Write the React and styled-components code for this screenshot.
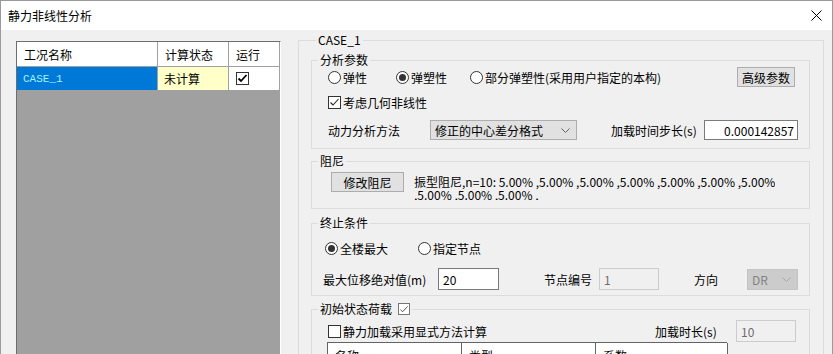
import React from "react";
import styled, { createGlobalStyle } from "styled-components";

const FONT = `"Noto Sans CJK SC", "Noto Sans", sans-serif`;

const Global = createGlobalStyle`
  html, body { margin: 0; padding: 0; background: #f0f0f0; }
  body { font-family: ${FONT}; font-size: 12px; color: #000; }
  * { box-sizing: border-box; }
`;

const Window = styled.div`
  width: 833px;
  height: 354px;
  overflow: hidden;
  border: 1px solid #9a9a9a;
  border-bottom: none;
  background: #f0f0f0;
  display: flex;
  flex-direction: column;
`;

const TitleBar = styled.div`
  height: 29px;
  flex: none;
  background: #fff;
  display: flex;
  align-items: center;
  justify-content: space-between;
  padding: 0 10px 0 7px;
  font-size: 12px;
`;

const Body = styled.div`
  flex: 1;
  display: flex;
  align-items: flex-start;
  padding-left: 15px;
  min-height: 0;
`;

/* ---------- left grid ---------- */
const Grid = styled.div`
  width: 265px;
  height: 330px;
  margin-top: 11px;
  flex: none;
  border-top: 1px solid #6d6d6d;
  border-left: 1px solid #6d6d6d;
  border-right: 1px solid #ffffff;
  background: #a0a0a0;
  display: grid;
  grid-template-columns: 141px 71px 51px;
  grid-template-rows: 25px 24px;
  align-content: start;
`;

const HeadCell = styled.div`
  background: #fff;
  border-right: 1px solid #a0a0a0;
  border-bottom: 1px solid #a0a0a0;
  display: flex;
  align-items: center;
  padding-left: 7px;
`;

const Cell = styled.div`
  background: ${(p) => p.$bg};
  color: ${(p) => p.$color || "#000"};
  border-right: 1px solid #a0a0a0;
  border-bottom: 1px solid #a0a0a0;
  display: flex;
  align-items: center;
  padding-left: ${(p) => p.$pad || 6}px;
  font-family: ${(p) => (p.$mono ? `"Liberation Mono", monospace` : FONT)};
  font-size: ${(p) => (p.$mono ? "11px" : "12px")};
`;

/* ---------- group boxes ---------- */
const Group = styled.fieldset`
  margin: ${(p) => p.$mt || 0}px 0 0 0;
  padding: ${(p) => p.$pt || 0}px ${(p) => p.$pr || 0}px ${(p) => p.$pb || 0}px 0;
  border: 1px solid #dcdcdc;
  min-width: 0;
  width: ${(p) => (p.$w ? `${p.$w}px` : "auto")};
  flex: none;
  display: flex;
  flex-direction: column;
`;

const Legend = styled.legend`
  margin-left: ${(p) => p.$ml || 6}px;
  padding: 0 2px;
  line-height: 14px;
  font-size: 12px;
  display: flex;
  align-items: center;
  gap: 6px;
`;

const Outer = styled(Group)`
  margin-left: 17px;
  height: 360px;
  padding-left: 12px;
  padding-right: 13px;
`;

const Row = styled.div`
  display: flex;
  align-items: center;
  height: ${(p) => p.$h || 20}px;
  margin-top: ${(p) => p.$mt || 0}px;
  padding-left: ${(p) => p.$pl || 0}px;
  padding-right: ${(p) => p.$pr || 0}px;
  flex: none;
`;

const Label = styled.span`
  width: ${(p) => (p.$w ? `${p.$w}px` : "auto")};
  margin-left: ${(p) => p.$ml || 0}px;
  flex: none;
  white-space: nowrap;
`;

const Spacer = styled.div`
  flex: 1;
`;

/* ---------- controls ---------- */
const RadioItem = styled.label`
  display: flex;
  align-items: center;
  gap: 2px;
  width: ${(p) => (p.$w ? `${p.$w}px` : "auto")};
  flex: none;
  white-space: nowrap;
`;

const Circle = styled.span`
  width: 13px;
  height: 13px;
  border-radius: 50%;
  border: 1px solid #333;
  background: #fff;
  display: flex;
  align-items: center;
  justify-content: center;
  flex: none;
  &::after {
    content: "";
    width: 7px;
    height: 7px;
    border-radius: 50%;
    background: ${(p) => (p.$on ? "#333" : "transparent")};
  }
`;

const Box = styled.span`
  width: ${(p) => p.$size || 13}px;
  height: ${(p) => p.$size || 13}px;
  border: 1px solid ${(p) => p.$border || "#333"};
  background: #fff;
  display: flex;
  align-items: center;
  justify-content: center;
  flex: none;
`;

const CheckItem = styled.label`
  display: flex;
  align-items: center;
  gap: 2px;
  white-space: nowrap;
`;

const Button = styled.button`
  width: ${(p) => p.$w}px;
  height: 20px;
  flex: none;
  background: #e1e1e1;
  border: 1px solid #adadad;
  font-family: ${FONT};
  font-size: 12px;
  color: #000;
  padding: 0;
  display: flex;
  align-items: center;
  justify-content: center;
`;

const Select = styled.div`
  width: ${(p) => p.$w}px;
  height: ${(p) => p.$h || 20}px;
  flex: none;
  background: ${(p) => (p.$disabled ? "#cccccc" : "#e1e1e1")};
  border: 1px solid ${(p) => (p.$disabled ? "#c4c4c4" : "#adadad")};
  color: ${(p) => (p.$disabled ? "#838383" : "#000")};
  display: flex;
  align-items: center;
  justify-content: space-between;
  padding: 0 6px 0 4px;
`;

const Input = styled.div`
  width: ${(p) => p.$w}px;
  height: ${(p) => p.$h || 22}px;
  margin-left: ${(p) => p.$ml || 0}px;
  flex: none;
  background: ${(p) => (p.$disabled ? "#f0f0f0" : "#fff")};
  border: 1px solid ${(p) => (p.$disabled ? "#cccccc" : "#7a7a7a")};
  color: ${(p) => (p.$disabled ? "#6d6d6d" : "#000")};
  display: flex;
  align-items: center;
  justify-content: ${(p) => (p.$right ? "flex-end" : "flex-start")};
  padding: 0 3px 0 4px;
`;

const DampText = styled.div`
  margin-left: 10px;
  margin-top: 3px;
  height: 25px;
  overflow: hidden;
  line-height: 13px;
  align-self: flex-start;
  white-space: nowrap;
`;

const DampLine = styled.div``;

const DampRow = styled.div`
  display: flex;
  align-items: flex-start;
  padding-left: 19px;
`;

const LoadTable = styled.div`
  margin-left: 15px;
  width: 400px;
  display: grid;
  grid-template-columns: 134px 134px 132px;
  border-top: 1px solid #646464;
  border-left: 1px solid #646464;
  flex: none;
`;

const LoadHead = styled.div`
  height: 26px;
  background: #fff;
  border-right: 1px solid #646464;
  border-bottom: 1px solid #a0a0a0;
  padding-left: 7px;
  display: flex;
  align-items: center;
`;

const Check = ({ color = "#000", w = 1.4 }) => (
  <svg width="11" height="11" viewBox="0 0 11 11">
    <polyline points="1.5,5.5 4,8 9.5,2" fill="none" stroke={color} strokeWidth={w} />
  </svg>
);

const Chevron = ({ color = "#606060" }) => (
  <svg width="9" height="5" viewBox="0 0 9 5">
    <polyline points="0.5,0.5 4.5,4.5 8.5,0.5" fill="none" stroke={color} strokeWidth="1" />
  </svg>
);

const CloseIcon = () => (
  <svg width="11" height="11" viewBox="0 0 11 11">
    <line x1="0.5" y1="0.5" x2="10.5" y2="10.5" stroke="#000" strokeWidth="1" />
    <line x1="10.5" y1="0.5" x2="0.5" y2="10.5" stroke="#000" strokeWidth="1" />
  </svg>
);

export default function App() {
  return (
    <>
      <Global />
      <Window>
        <TitleBar>
          <span>静力非线性分析</span>
          <CloseIcon />
        </TitleBar>
        <Body>
          <Grid>
            <HeadCell>工况名称</HeadCell>
            <HeadCell>计算状态</HeadCell>
            <HeadCell>运行</HeadCell>
            <Cell $bg="#0078d7" $color="#a6f4ff" $mono>CASE_1</Cell>
            <Cell $bg="#ffffc8">未计算</Cell>
            <Cell $bg="#ffffff" $pad={7}>
              <Box>
                <Check w={1.8} />
              </Box>
            </Cell>
          </Grid>

          <Outer $mt={3} $w={526} $pt={6}>
            <Legend $ml={5}>CASE_1</Legend>

            <Group $pb={8}>
              <Legend>分析参数</Legend>
              <Row $pl={16} $pr={14}>
                <RadioItem $w={68}>
                  <Circle />
                  弹性
                </RadioItem>
                <RadioItem $w={74}>
                  <Circle $on />
                  弹塑性
                </RadioItem>
                <RadioItem>
                  <Circle />
                  部分弹塑性(采用用户指定的本构)
                </RadioItem>
                <Spacer />
                <Button $w={58}>高级参数</Button>
              </Row>
              <Row $pl={16} $mt={5}>
                <CheckItem>
                  <Box>
                    <Check color="#222" w={1.1} />
                  </Box>
                  考虑几何非线性
                </CheckItem>
              </Row>
              <Row $pl={16} $mt={8}>
                <Label $w={102}>动力分析方法</Label>
                <Select $w={147}>
                  <span>修正的中心差分格式</span>
                  <Chevron />
                </Select>
                <Label $w={93} $ml={34}>加载时间步长(s)</Label>
                <Input $w={94} $h={20} $right>0.000142857</Input>
              </Row>
            </Group>

            <Group $mt={5} $pt={4} $pb={8}>
              <Legend>阻尼</Legend>
              <DampRow>
                <Button $w={73}>修改阻尼</Button>
                <DampText>
                  <DampLine>振型阻尼,n=10: 5.00% ,5.00% ,5.00% ,5.00% ,5.00% ,5.00% ,5.00%</DampLine>
                  <DampLine>,5.00% ,5.00% ,5.00% ,</DampLine>
                </DampText>
              </DampRow>
            </Group>

            <Group $mt={7} $pt={8} $pb={5}>
              <Legend>终止条件</Legend>
              <Row $pl={13}>
                <RadioItem $w={93}>
                  <Circle $on />
                  全楼最大
                </RadioItem>
                <RadioItem>
                  <Circle />
                  指定节点
                </RadioItem>
              </Row>
              <Row $pl={11} $mt={10} $h={22}>
                <Label $w={115}>最大位移绝对值(m)</Label>
                <Input $w={61}>20</Input>
                <Label $w={55} $ml={45}>节点编号</Label>
                <Input $w={60} $disabled>1</Input>
                <Label $w={53} $ml={35}>方向</Label>
                <Select $w={51} $h={21} $disabled>
                  <span>DR</span>
                  <Chevron color="#a8a8a8" />
                </Select>
              </Row>
            </Group>

            <Group $mt={6} $pt={4}>
              <Legend>
                初始状态荷载
                <Box $size={12} $border="#777">
                  <Check color="#444" w={1} />
                </Box>
              </Legend>
              <Row $pl={16} $pr={13} $h={22}>
                <CheckItem>
                  <Box />
                  静力加载采用显式方法计算
                </CheckItem>
                <Spacer />
                <Label $w={81}>加载时长(s)</Label>
                <Input $w={60} $disabled>10</Input>
              </Row>
              <LoadTable>
                <LoadHead>名称</LoadHead>
                <LoadHead>类型</LoadHead>
                <LoadHead>系数</LoadHead>
              </LoadTable>
            </Group>
          </Outer>
        </Body>
      </Window>
    </>
  );
}
